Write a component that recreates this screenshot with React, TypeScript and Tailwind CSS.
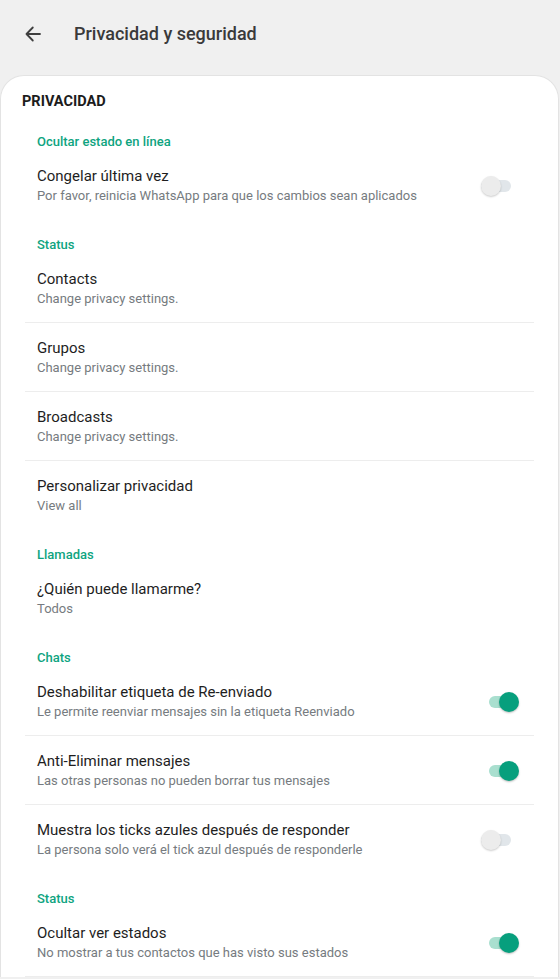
import React from 'react';

type Item = {
  title: string;
  subtitle: string;
  toggle?: 'on' | 'off';
};

type Section = {
  header: string;
  items: Item[];
};

const sections: Section[] = [
  {
    header: 'Ocultar estado en línea',
    items: [
      {
        title: 'Congelar última vez',
        subtitle: 'Por favor, reinicia WhatsApp para que los cambios sean aplicados',
        toggle: 'off',
      },
    ],
  },
  {
    header: 'Status',
    items: [
      { title: 'Contacts', subtitle: 'Change privacy settings.' },
      { title: 'Grupos', subtitle: 'Change privacy settings.' },
      { title: 'Broadcasts', subtitle: 'Change privacy settings.' },
      { title: 'Personalizar privacidad', subtitle: 'View all' },
    ],
  },
  {
    header: 'Llamadas',
    items: [{ title: '¿Quién puede llamarme?', subtitle: 'Todos' }],
  },
  {
    header: 'Chats',
    items: [
      {
        title: 'Deshabilitar etiqueta de Re-enviado',
        subtitle: 'Le permite reenviar mensajes sin la etiqueta Reenviado',
        toggle: 'on',
      },
      {
        title: 'Anti-Eliminar mensajes',
        subtitle: 'Las otras personas no pueden borrar tus mensajes',
        toggle: 'on',
      },
      {
        title: 'Muestra los ticks azules después de responder',
        subtitle: 'La persona solo verá el tick azul después de responderle',
        toggle: 'off',
      },
    ],
  },
  {
    header: 'Status',
    items: [
      {
        title: 'Ocultar ver estados',
        subtitle: 'No mostrar a tus contactos que has visto sus estados',
        toggle: 'on',
      },
    ],
  },
];

function Toggle({ on }: { on: boolean }) {
  return (
    <div className="relative w-[38px] h-[20px] shrink-0">
      {on ? (
        <>
          <div className="absolute left-[8px] top-[4px] w-[28px] h-[12px] rounded-full bg-[#a9dfcf]" />
          <div className="absolute right-0 top-0 w-[20px] h-[20px] rounded-full bg-[#079f7d] shadow-[0_1px_2px_rgba(0,0,0,0.25)]" />
        </>
      ) : (
        <>
          <div className="absolute left-0 top-[4px] w-[30px] h-[12px] rounded-full bg-[#e1e6ea]" />
          <div className="absolute left-0 top-0 w-[20px] h-[20px] rounded-full bg-[#ececec] shadow-[0_1px_2px_rgba(0,0,0,0.2)]" />
        </>
      )}
    </div>
  );
}

export default function App() {
  return (
    <div
      className="min-h-screen bg-[#f0f0f0]"
      style={{ fontFamily: 'Roboto, "Noto Sans", sans-serif' }}
    >
      <div className="h-[68px] flex items-center">
        <svg
          width="16"
          height="16"
          viewBox="0 0 16 16"
          fill="none"
          stroke="#3f3f3f"
          strokeWidth="1.8"
          strokeLinecap="round"
          strokeLinejoin="round"
          className="ml-[25px]"
        >
          <path d="M15 8H1.5M7.8 1.5 1.5 8l6.3 6.5" />
        </svg>
        <h1 className="ml-[33px] text-[18px] font-medium text-[#3a3a3a] leading-[24px]">
          Privacidad y seguridad
        </h1>
      </div>

      <div className="mt-[7px] w-[559px] bg-white rounded-t-[24px] border border-[#e3e3e3] border-b-0 pt-[16px]">
        <div className="px-[21px] pb-[4px] text-[14.5px] leading-[20px] font-bold text-[#1c1c1c]">
          PRIVACIDAD
        </div>

        {sections.map((section, si) => (
          <div key={si}>
            <div className="pl-[36px] pt-[17px] text-[13px] leading-[18px] font-medium text-[#0ea47f]">
              {section.header}
            </div>
            <div className="mx-[24px]">
              {section.items.map((item, ii) => {
                const last = ii === section.items.length - 1;
                const divider = !last || si === sections.length - 1;
                return (
                  <div
                    key={ii}
                    className={`flex items-center pl-[12px] pr-[15px] pt-[15px] pb-[14px] ${
                      divider ? 'border-b border-[#ededed]' : ''
                    }`}
                  >
                    <div className="flex-1 min-w-0">
                      <div className="text-[15px] leading-[20px] text-[#1e1e1e]">
                        {item.title}
                      </div>
                      <div className="mt-[1px] text-[13px] leading-[18px] text-[#767b80]">
                        {item.subtitle}
                      </div>
                    </div>
                    {item.toggle && <Toggle on={item.toggle === 'on'} />}
                  </div>
                );
              })}
            </div>
          </div>
        ))}
      </div>
    </div>
  );
}
